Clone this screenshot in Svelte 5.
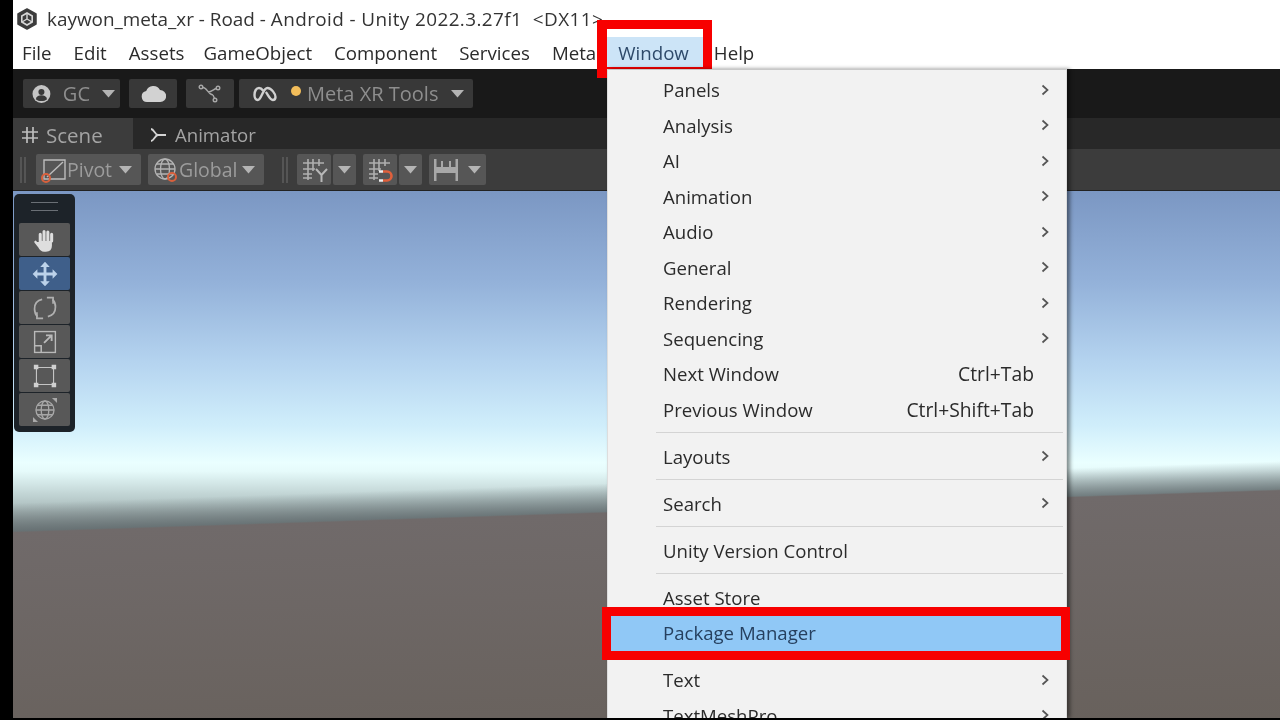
<script lang="ts">
	const menuBar = ['File', 'Edit', 'Assets', 'GameObject', 'Component', 'Services', 'Meta', 'Window', 'Help'];
	const upper = [
		{ label: 'Panels', arrow: true },
		{ label: 'Analysis', arrow: true },
		{ label: 'AI', arrow: true },
		{ label: 'Animation', arrow: true },
		{ label: 'Audio', arrow: true },
		{ label: 'General', arrow: true },
		{ label: 'Rendering', arrow: true },
		{ label: 'Sequencing', arrow: true },
		{ label: 'Next Window', keys: 'Ctrl+Tab' },
		{ label: 'Previous Window', keys: 'Ctrl+Shift+Tab' }
	];
</script>

{#snippet caret()}
	<svg class="caret" width="13" height="8" viewBox="0 0 13 8"><path d="M0 0h13L6.5 7.5z" fill="#b4b4b4" /></svg>
{/snippet}

{#snippet grid()}
	<svg width="24" height="24" viewBox="0 0 24 24" fill="none" stroke="#b0b0b0" stroke-width="1.6">
		<path d="M6 1v21M11 1v12M17 1v7M1 5h21M1 11h12M1 16h9M1 20h9" />
	</svg>
{/snippet}

{#snippet item(label: string, arrow = false, keys = '')}
	<span>{label}</span>
	{#if keys}<span class="keys">{keys}</span>{/if}
	{#if arrow}
		<svg class="arrow" width="8" height="12" viewBox="0 0 8 12" fill="none" stroke="#555" stroke-width="1.7"><path d="M1.500 1.500L6.500 6l-5 4.500" /></svg>
	{/if}
{/snippet}

<div class="page">
	<div class="strip"></div>
	<div class="editor">
		<div class="title">
			<svg width="22" height="22" viewBox="0 0 22 22">
				<path d="M11 1l9 5v10l-9 5-9-5V6z" fill="#3c3c3c" stroke="#3c3c3c" stroke-linejoin="round" stroke-width="1.5" />
				<path d="M11 5l5.200 3v6L11 17l-5.200-3V8z" fill="none" stroke="#d8d8d8" stroke-width="1.6" />
				<path d="M11 11V5.500M11 11l-5 3M11 11l5 3" stroke="#d8d8d8" stroke-width="1.4" />
			</svg>
			<span>kaywon_meta_xr - Road - <span class="wide">Android - Unity 2022.3.27f1 &nbsp;&lt;DX11&gt;</span></span>
		</div>
		<nav class="menubar">
			{#each menuBar as m}
				<span class="top" class:open={m === 'Window'}>
					{m}
					{#if m === 'Window'}<i class="red win"></i>{/if}
				</span>
			{/each}
		</nav>

		<div class="toolbar">
			<div class="btn gc">
				<svg width="20" height="20" viewBox="0 0 20 20">
					<circle cx="10" cy="10" r="9.500" fill="#c4c4c4" />
					<circle cx="10" cy="7.800" r="3.200" fill="#383838" />
					<path d="M4 15.500c1-3.400 3.200-4.300 6-4.300s5 .9 6 4.300c-3 2.600-9 2.600-12 0z" fill="#383838" />
				</svg>
				<span>GC</span>
				{@render caret()}
			</div>
			<div class="btn square">
				<svg width="25" height="17" viewBox="0 0 25 17"><path d="M6 17a5.500 5.500 0 0 1-.8-10.900A7.500 7.500 0 0 1 19 5a6 6 0 0 1 .3 12z" fill="#d2d2d2" /></svg>
			</div>
			<div class="btn square">
				<svg width="24" height="20" viewBox="0 0 24 20" fill="none" stroke="#a8a8a8" stroke-width="1.400">
					<circle cx="3" cy="3" r="1.800" />
					<circle cx="20" cy="4" r="1.800" />
					<circle cx="17" cy="16" r="1.800" />
					<path d="M5 3.500c4 0 5 7 10 7.500M10 8c3 0 5-2 8-3.500M15 11l1.500 3.500" />
				</svg>
			</div>
			<div class="btn meta">
				<svg width="24" height="16" viewBox="0 0 24 16" fill="none" stroke="#d0d0d0" stroke-width="2.400">
					<path d="M10 4.500C8.800 2.800 7.500 2 6 2 3.200 2 1.500 5 1.500 9c0 3 1.200 5 3.300 5 3.700 0 5-12 9.700-12 4 0 8 6 8 9 0 2-1.200 3-2.700 3-3 0-4.800-5.500-7-8" />
				</svg>
				<i class="dot"></i>
				<span>Meta XR Tools</span>
				{@render caret()}
			</div>
		</div>

		<div class="tabs">
			<div class="tab active">
				<svg width="16" height="16" viewBox="0 0 16 16" fill="none" stroke="#bdbdbd" stroke-width="1.700"><path d="M5 0v16M11 0v16M0 5h16M0 11h16" /></svg>
				<span>Scene</span>
			</div>
			<div class="tab">
				<svg width="17" height="14" viewBox="0 0 17 14" fill="none" stroke="#d4d4d4" stroke-width="1.800"><path d="M1 1c3 0 4 6 7 6h8M1 13c3 0 4-6 7-6" /></svg>
				<span>Animator</span>
			</div>
		</div>

		<div class="scenebar">
			<i class="grip"></i>
			<div class="tool pivot">
				<svg width="26" height="26" viewBox="0 0 26 26">
					<path d="M3 3h21v19H3z" fill="none" stroke="#bdbdbd" stroke-width="1.400" />
					<path d="M6 20L22 5" stroke="#bdbdbd" stroke-width="1.400" />
					<circle cx="5" cy="21" r="4" fill="none" stroke="#d9603c" stroke-width="2" />
				</svg>
				<span>Pivot</span>
				{@render caret()}
			</div>
			<div class="tool global">
				<svg width="26" height="26" viewBox="0 0 26 26" fill="none" stroke="#b4b4b4" stroke-width="1.300">
					<circle cx="12" cy="12" r="10" />
					<ellipse cx="12" cy="12" rx="4.500" ry="10" />
					<path d="M2 12h20M3.500 7h17M3.500 17h17" />
					<circle cx="19" cy="20" r="4" stroke="#d9603c" stroke-width="2" />
				</svg>
				<span>Global</span>
				{@render caret()}
			</div>
			<i class="grip second"></i>
			<div class="tool icon">
				{@render grid()}
				<svg class="letter" width="13" height="14" viewBox="0 0 13 14" fill="none" stroke="#b8b8b8" stroke-width="2"><path d="M1 1l5.500 6L12 1M6.500 7v7" /></svg>
			</div>
			<div class="tool drop">{@render caret()}</div>
			<div class="tool icon">
				{@render grid()}
				<svg class="magnet" width="15" height="12" viewBox="0 0 15 12" fill="none" stroke-width="2.600">
					<path d="M4 1.500h4a4.500 4.500 0 0 1 0 9H4" stroke="#e0603c" />
					<path d="M0 1.500h4M0 10.500h4" stroke="#eee" />
				</svg>
			</div>
			<div class="tool drop">{@render caret()}</div>
			<div class="tool align">
				<svg width="24" height="22" viewBox="0 0 24 22" fill="#a8a8a8">
					<path d="M0 0h2.500v22H0zM21.500 0H24v22h-2.500zM7 2h2v7H7zM15 2h2v7h-2zM2.500 8h19v6h-19z" />
				</svg>
				{@render caret()}
			</div>
		</div>

		<div class="scene">
			<div class="tools">
				<div class="handle"></div>
				<div class="tbtn">
					<svg width="26" height="26" viewBox="0 0 26 26" fill="none" stroke="#dedede" stroke-linecap="round" stroke-width="3.200">
						<path d="M8 16V7M12 13V4M16 13V4.500M20 14V7" />
						<path d="M9 15h10v4c0 3-2 5-5 5h-2c-3 0-4-2-5-4l-4-5" fill="#dedede" stroke-width="2.600" />
					</svg>
				</div>
				<div class="tbtn on">
					<svg width="28" height="28" viewBox="0 0 28 28" fill="#bcd2ea"><path d="M14 1l5 5.500h-3.500v6H22V9l5 5-5 5v-3.500h-6.500v6H19L14 27l-5-5.500h3.500v-6H6V19l-5-5 5-5v3.500h6.500v-6H9z" /></svg>
				</div>
				<div class="tbtn">
					<svg width="26" height="26" viewBox="0 0 26 26" fill="none" stroke="#b0b0b0" stroke-width="1.800">
						<path d="M10 4C5 5 2 9 2 14c0 3 1 6 3 8" />
						<path d="M16 22c5-1 8-5 8-10 0-3-1-6-3-8" />
						<path d="M15 2h6.500v6.500M11 24H4.500v-6.500" />
					</svg>
				</div>
				<div class="tbtn">
					<svg width="24" height="24" viewBox="0 0 24 24" fill="none" stroke="#b9b9b9" stroke-width="1.600">
						<path d="M1 1h22v22H1zM1 16h7v7" />
						<path d="M11 13l8-8M13 5h6v6" stroke-width="2" />
					</svg>
				</div>
				<div class="tbtn">
					<svg width="24" height="24" viewBox="0 0 24 24">
						<path d="M3 3h18v18H3z" fill="none" stroke="#c4c4c4" stroke-width="1.200" />
						<path d="M0 0h5v5H0zM19 0h5v5h-5zM0 19h5v5H0zM19 19h5v5h-5z" fill="#d0d0d0" />
					</svg>
				</div>
				<div class="tbtn">
					<svg width="26" height="26" viewBox="0 0 26 26" fill="none" stroke="#a8a8a8" stroke-width="1.400">
						<circle cx="13" cy="13" r="9.500" />
						<ellipse cx="13" cy="13" rx="4" ry="9.500" />
						<path d="M3.500 13h19M5 8h16M5 18h16" />
						<path d="M22 1h3v3L22 1zM1 22v3h3L1 22z" fill="#c4c4c4" />
					</svg>
				</div>
			</div>
		</div>
	</div>

	<div class="menu">
		{#each upper as row}
			<div class="row">{@render item(row.label, row.arrow, row.keys)}</div>
		{/each}
		<div class="sep"></div>
		<div class="row">{@render item('Layouts', true)}</div>
		<div class="sep"></div>
		<div class="row">{@render item('Search', true)}</div>
		<div class="sep"></div>
		<div class="row">{@render item('Unity Version Control')}</div>
		<div class="sep"></div>
		<div class="row">{@render item('Asset Store')}</div>
		<div class="row hot">
			{@render item('Package Manager')}
			<i class="red pkg"></i>
		</div>
		<div class="sep"></div>
		<div class="row">{@render item('Text', true)}</div>
		<div class="row">{@render item('TextMeshPro', true)}</div>
	</div>
	<div class="bottom"></div>
</div>

<style>
	:global(body) {
		margin: 0;
		background: #000;
	}
	.page {
		position: relative;
		display: flex;
		width: 1280px;
		height: 720px;
		overflow: hidden;
		background: #000;
		font-family: 'Open Sans', 'Noto Sans', sans-serif;
		filter: blur(0.5px);
	}
	.strip {
		flex: 0 0 13px;
		background: #000;
		z-index: 1;
	}
	.editor {
		flex: 1;
		display: flex;
		flex-direction: column;
		min-width: 0;
	}
	.title {
		height: 37px;
		display: flex;
		align-items: center;
		gap: 9px;
		padding-left: 3px;
		background: #fff;
		color: #333;
		font-size: 18.9px;
	}
	.wide {
		letter-spacing: 0.41px;
	}
	.menubar {
		height: 32px;
		display: flex;
		background: #fff;
		color: #2b2b2b;
		font-size: 18.7px;
		align-items: flex-start;
	}
	.top {
		position: relative;
		height: 30px;
		line-height: 31px;
		padding: 0 11px;
		white-space: nowrap;
	}
	.top:first-child {
		margin-left: -2px;
	}
	.top:nth-child(3) {
		margin-right: -3px;
	}
	.top.open {
		padding-right: 14px;
		background: #cce4f7;
		color: #2e4a6a;
	}
	.red {
		position: absolute;
		display: block;
		border: 9px solid #f70000;
		box-sizing: border-box;
		pointer-events: none;
	}
	.win {
		left: -10px;
		right: -9px;
		top: -17px;
		bottom: -11px;
		border-bottom-width: 11px;
		border-left-width: 10px;
	}
	.toolbar {
		height: 49px;
		display: flex;
		align-items: center;
		gap: 9px;
		padding-left: 10px;
		background: #191919;
	}
	.btn {
		height: 29px;
		display: flex;
		align-items: center;
		background: #383838;
		border-radius: 2px;
		color: #8e8e8e;
		font-size: 20px;
	}
	.gc {
		width: 97px;
		padding-left: 9px;
		box-sizing: border-box;
		gap: 12px;
	}
	.gc .caret {
		margin-right: 5px;
	}
	.square {
		width: 48px;
		justify-content: center;
	}
	.meta {
		margin-left: -4px;
		width: 234px;
		box-sizing: border-box;
		padding-left: 14px;
	}
	.dot {
		width: 10px;
		height: 10px;
		margin: -6px 6px 0 14px;
		border-radius: 50%;
		background: #f2bd5a;
	}
	.caret {
		flex: none;
		margin-left: auto;
		margin-right: 9px;
	}
	.tabs {
		height: 31px;
		display: flex;
		background: #282828;
	}
	.tab {
		display: flex;
		align-items: center;
		gap: 8px;
		padding: 2px 0 0 17px;
		color: #a4a4a4;
		font-size: 18.600px;
	}
	.tab.active {
		width: 120px;
		box-sizing: border-box;
		padding-left: 9px;
		background: #3c3c3c;
		font-size: 20.500px;
	}
	.scenebar {
		height: 42px;
		display: flex;
		align-items: center;
		gap: 7px;
		padding-left: 7px;
		box-sizing: border-box;
		background: #3c3c3c;
		border-bottom: 1px solid #222;
	}
	.grip {
		width: 6px;
		height: 26px;
		margin-right: 3px;
		border-left: 2px solid #555;
		border-right: 2px solid #555;
		box-sizing: border-box;
	}
	.grip.second {
		margin: 0 2px 0 11px;
	}
	.tool {
		height: 31px;
		display: flex;
		align-items: center;
		box-sizing: border-box;
		background: #565656;
		border-radius: 2px;
		color: #9c9c9c;
		font-size: 19.500px;
	}
	.pivot {
		width: 105px;
		padding-left: 5px;
	}
	.global {
		width: 116px;
		padding-left: 5px;
	}
	.icon {
		width: 34px;
		justify-content: flex-start;
		padding-left: 5px;
		position: relative;
		margin-right: -5px;
	}
	.drop {
		width: 23px;
		justify-content: center;
	}
	.drop .caret,
	.align .caret {
		margin: 0 5px;
	}
	.align {
		width: 57px;
		padding-left: 5px;
		justify-content: space-between;
	}
	.letter {
		position: absolute;
		right: 3px;
		bottom: 3px;
	}
	.magnet {
		position: absolute;
		right: 3px;
		bottom: 3px;
	}
	.scene {
		flex: 1;
		position: relative;
		background:
			linear-gradient(178.1deg, transparent 340px, #706a6a 341.5px, #68615c 100%),
			linear-gradient(178.1deg, transparent 312px, rgba(95, 105, 108, 0.8) 340px),
			linear-gradient(
				#7b97c3 0,
				#93b1d9 90px,
				#b4d3ef 170px,
				#d0eefb 235px,
				#eaffff 272px,
				#e6fbfb 280px,
				#b4c6c6 312px,
				#899393 341px
			);
	}
	.tools {
		position: absolute;
		left: 1px;
		top: 3px;
		width: 61px;
		box-sizing: border-box;
		padding: 29px 5px 6px;
		display: flex;
		flex-direction: column;
		gap: 1px;
		background: #1d2329;
		border-radius: 5px;
	}
	.handle {
		position: absolute;
		left: 17px;
		right: 17px;
		top: 8px;
		height: 7px;
		border-top: 1px solid #6a6f75;
		border-bottom: 1px solid #6a6f75;
	}
	.tbtn {
		height: 33px;
		display: flex;
		align-items: center;
		justify-content: center;
		background: #585858;
		border-radius: 2px;
	}
	.tbtn.on {
		background: #3f5f8a;
	}
	.tbtn svg {
		transform: scale(0.95);
	}
	.menu {
		position: absolute;
		left: 607px;
		top: 69px;
		width: 460px;
		height: 649px;
		box-sizing: border-box;
		padding-top: 2px;
		background: #f2f2f2;
		border-top: 1px solid #c8c8c8;
		border-left: 1px solid #ddd;
		border-right: 1px solid #ddd;
		box-shadow: 3px 0 4px rgba(0, 0, 0, 0.45);
		color: #2b2b2b;
		font-size: 18.600px;
	}
	.row {
		position: relative;
		height: 35.500px;
		display: flex;
		align-items: center;
		padding-left: 55px;
	}
	.keys {
		position: absolute;
		right: 32px;
		font-size: 19.300px;
	}
	.arrow {
		position: absolute;
		right: 17px;
	}
	.sep {
		height: 11.500px;
		margin-left: 48px;
		display: flex;
		align-items: center;
	}
	.sep::after {
		content: '';
		flex: 1;
		height: 1px;
		background: #d4d4d4;
		margin-right: 3px;
	}
	.hot {
		background: #90c8f6;
		color: #26405f;
	}
	.pkg {
		left: -6px;
		right: -4px;
		top: -8px;
		bottom: -9px;
	}
	.bottom {
		position: absolute;
		left: 0;
		right: 0;
		bottom: 0;
		height: 2px;
		background: #000;
	}
</style>
